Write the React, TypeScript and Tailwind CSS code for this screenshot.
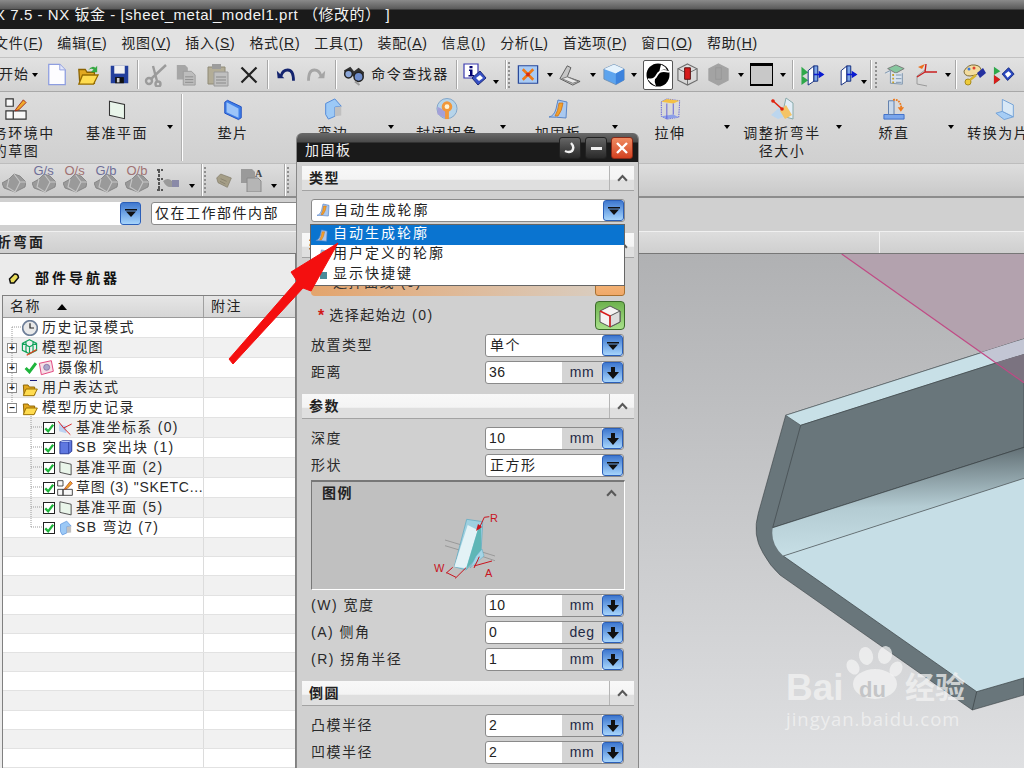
import type { ReactNode } from "react";

const Caret = ({ className = "" }: { className?: string }) => (
  <div className={`flex shrink-0 justify-center ${className}`}>
    <div className="h-0 w-0 border-x-[3px] border-t-[4px] border-x-transparent border-t-black" />
  </div>
);
const Sep = ({ className = "w-[8px]" }: { className?: string }) => (
  <div className={`flex h-full shrink-0 justify-center ${className}`}>
    <div className="h-full w-[2px] border-r border-l border-r-white border-l-[#a8a8a8]" />
  </div>
);
const Dots = () => (
  <div className="h-[26px] w-[5px] shrink-0 border-l-2 border-dotted border-[#8f8f8f]" />
);
const Slot = ({ className, children }: { className: string; children: ReactNode }) => (
  <div className={`flex shrink-0 items-center justify-center ${className}`}>{children}</div>
);
const Svg = ({ className = "h-[22px] w-[22px]", children }: { className?: string; children: ReactNode }) => (
  <svg viewBox="0 0 24 24" className={className}>{children}</svg>
);

const Gusset = ({ className }: { className?: string }) => (
  <Svg className={className}>
    <path d="M3 20 Q8 19 10 12 L12 3 L21 5 L20 21 Q10 20 3 20Z" fill="#a9c8ef" stroke="#5a86c8" strokeWidth="1" />
    <path d="M9 19 Q12 14 13 6 L17 6 Q16 14 12 19Z" fill="#f2a12c" stroke="#c96a10" strokeWidth=".7" />
  </Svg>
);
const DocNew = () => (
  <Svg className="h-[25px] w-[22px]">
    <path d="M3 1H15L21 7V23H3Z" fill="#fdfdff" stroke="#8e9ee0" strokeWidth="1.4" />
    <path d="M15 1V7H21" fill="#e3e7fa" stroke="#8e9ee0" />
  </Svg>
);
const Folder = ({ className = "h-[22px] w-[24px]", arrow = true }: { className?: string; arrow?: boolean }) => (
  <Svg className={className}>
    <path d="M2 6H9L11 9H19V21H3Z" fill="#e2a820" stroke="#8a6200" strokeWidth="1.400" />
    <path d="M6 12H23L18 22H2Z" fill="#ffdc50" stroke="#966c00" strokeWidth="1.400" />
    {arrow && <path d="M12 7Q16 1 20 4L22 2V9H15L18 6Q15 4 12 7Z" fill="#37a844" />}
  </Svg>
);
const Floppy = () => (
  <Svg className="h-[21px] w-[21px]">
    <path d="M2 2H22V22H2Z" fill="#233f9c" />
    <path d="M6 2H18V11H6Z" fill="#f1f1f1" />
    <path d="M7 15H17V22H7Z" fill="#111" />
    <path d="M9 16H12V21H9Z" fill="#cfcfcf" />
  </Svg>
);
const Scissors = () => (
  <Svg className="h-[24px] w-[24px]">
    <g stroke="#9b9b9b" fill="none" strokeWidth="2.4">
      <circle cx="5" cy="18" r="3" />
      <circle cx="14" cy="21" r="2.5" />
      <path d="M7 16 22 2M13 18 9 3" />
    </g>
  </Svg>
);
const Copy = () => (
  <Svg className="h-[22px] w-[22px]">
    <path d="M2 1H11L14 4V17H2Z" fill="#a6a6a6" />
    <path d="M9 8H18L22 12V23H9Z" fill="#bdbdbd" stroke="#9a9a9a" />
    <path d="M11 14H20M11 17H20M11 20H20" stroke="#8a8a8a" />
  </Svg>
);
const Paste = () => (
  <Svg className="h-[24px] w-[24px]">
    <path d="M2 4H19V21H2Z" fill="#b3ad97" stroke="#8f8a76" />
    <path d="M6 1H15V6H6Z" fill="#9c9c9c" />
    <path d="M8 9H22V23H8Z" fill="#c0c0c0" stroke="#9a9a9a" />
    <path d="M10 14H20M10 17H20M10 20H20" stroke="#8a8a8a" />
  </Svg>
);
const Undo = ({ flip = false }: { flip?: boolean }) => (
  <Svg className={`h-[20px] w-[22px] ${flip ? "-scale-x-100" : ""}`}>
    <path d="M6 13Q8 6 14 6Q21 6 21 19" fill="none" stroke={flip ? "#a5a5a5" : "#14246e"} strokeWidth="3.4" />
    <path d="M1 7L10 16H2Z" fill={flip ? "#a5a5a5" : "#14246e"} />
  </Svg>
);
const Binoculars = () => (
  <Svg className="h-[22px] w-[24px]">
    <path d="M1 7 8 3 12 8 17 4 23 9 22 16 15 11 11 14 9 11 4 14Z" fill="#333" />
    <circle cx="6" cy="11" r="4.2" fill="#8ba6d8" stroke="#222" strokeWidth="1.6" />
    <circle cx="17" cy="14" r="5" fill="#6f8dcb" stroke="#222" strokeWidth="1.6" />
    <path d="M13 19 18 23" stroke="#999" strokeWidth="2" />
  </Svg>
);
const Info = () => (
  <Svg className="h-[24px] w-[24px]">
    <path d="M1 1H15V15H1Z" fill="#fff" stroke="#3a3ab0" strokeWidth="1.2" />
    <path d="M6.5 3H9.5V5.2H6.5ZM6 6.5H9.5V12H11V13.4H5.5V12H7V8H6Z" fill="#000070" />
    <path d="M9 15 17 8 23 15 15 22Z" fill="#3650c4" stroke="#1d2a7a" />
    <path d="M13 15 17 12 20 15 16 18Z" fill="#fff" />
  </Svg>
);
const ViewFit = () => (
  <Svg className="h-[21px] w-[22px]">
    <path d="M1 2H23V22H1Z" fill="#a9cbf4" stroke="#29489a" strokeWidth="1.4" />
    <path d="M6 6 18 18M18 6 6 18" stroke="#ef7a18" strokeWidth="3" />
    <path d="M10 10H14V14H10Z" fill="#d82b12" />
  </Svg>
);
const Shade = () => (
  <Svg className="h-[22px] w-[24px]">
    <path d="M1 16 9 2 13 4 9 14 23 19 15 23Z" fill="#c6c6c6" stroke="#555" />
    <path d="M3 16 9 14 21 19 15 21Z" fill="#e8e8e8" stroke="#777" />
  </Svg>
);
const Cube = () => (
  <Svg className="h-[23px] w-[24px]">
    <path d="M12 1 23 6V18L14 23 1 17V6Z" fill="#5da4ee" stroke="#6d8fb4" />
    <path d="M12 1 23 6 14 11 1 6Z" fill="#e5f2fc" />
    <path d="M14 11V23L23 18V6Z" fill="#3d83dd" />
  </Svg>
);
const Yin = () => (
  <Svg className="h-[24px] w-[24px]">
    <circle cx="12" cy="12" r="11.500" fill="#000" />
    <path d="M13 10Q16 5 21 7 19 3 15 1.500 14 5 13 10Z" fill="#fff" />
    <path d="M2 16Q4 20 10 23 8 19 9 15 6 17 2 16Z" fill="#fff" />
    <path d="M2 16Q8 18 11 12T23 9" fill="none" stroke="#fff" strokeWidth="1.800" />
  </Svg>
);
const CubeRed = ({ grey = false }: { grey?: boolean }) => (
  <Svg className="h-[23px] w-[23px]">
    <path d="M12 1 22 6V18L12 23 2 18V6Z" fill={grey ? "#a3a3a3" : "none"} stroke={grey ? "#a3a3a3" : "#6d6d6d"} strokeWidth="1.2" />
    {!grey && <path d="M2 6 12 11 22 6M12 11V23" fill="none" stroke="#6d6d6d" />}
    <path d="M9 5H15V17H9Z" fill={grey ? "#a3a3a3" : "#d61a1a"} stroke={grey ? "#999" : "#5a1010"} />
  </Svg>
);
const Frame = () => <div className="h-[23px] w-[23px] border-x border-b-2 border-t-[3px] border-black bg-[#c8c8c8]" />;
const Slab = ({ tail = false }: { tail?: boolean }) => (
  <Svg className="h-[23px] w-[26px]">
    {tail && <path d="M1 4 8 10 1 14ZM1 13 8 18 1 23Z" fill="#2ea84a" />}
    <path d="M8 8 14 3V19L8 23Z" fill="#fff" stroke="#102a7c" />
    <path d="M14 3H18V19H14Z" fill="#7da7e8" stroke="#102a7c" />
    <path d="M14 12H23" stroke="#0a1bd0" strokeWidth="1.6" />
    <path d="M19 8 25 12 19 16Z" fill="#0a1bd0" />
  </Svg>
);
const Layers = () => (
  <Svg className="h-[22px] w-[24px]">
    <path d="M4 5 13 1 22 5 13 10Z" fill="#87c79f" stroke="#777" />
    <path d="M1 10 7 7V21L20 22V10" fill="#d9e3ef" stroke="#7890a8" />
    <path d="M9 11H11V13H9ZM9 15H11V17H9ZM9 19H11V21H9Z" fill="#c5a029" />
    <path d="M13 12H19M13 16H19M13 20H19" stroke="#7890a8" />
  </Svg>
);
const Axes = () => (
  <Svg className="h-[24px] w-[24px]">
    <path d="M3 21 3 13 11 7" stroke="#9a9a9a" fill="none" />
    <path d="M3 21 13 23" stroke="#9a9a9a" />
    <path d="M11 9H23M11 9 12 1M11 9 3 14" stroke="#c91f1f" strokeWidth="1.4" />
    <path d="M4 4 11 1 8 6Z" fill="#ec6f1b" />
  </Svg>
);
const Palette = () => (
  <Svg className="h-[24px] w-[24px]">
    <path d="M2 8Q6 1 13 2T19 9Q14 13 8 13 2 13 2 8Z" fill="#f3dc9e" stroke="#7b6a38" />
    <circle cx="7" cy="6" r="1.500" fill="#3a7ae0" />
    <circle cx="12" cy="5" r="1.500" fill="#e04030" />
    <path d="M15 10 21 5 24 10 18 15Z" fill="#2430a0" />
    <circle cx="6" cy="19" r="3" fill="#eecb3a" stroke="#a88a1a" />
    <path d="M8 17 14 12" stroke="#d8b430" strokeWidth="2.400" />
  </Svg>
);
const Play = () => (
  <Svg className="h-[22px] w-[24px]">
    <path d="M1 3 8 8 1 12ZM1 12 8 17 1 22Z" fill="#2ea84a" />
    <path d="M1 12 8 17 1 22Z" fill="#d81c1c" />
    <path d="M10 11 17 4 23 11 16 18Z" fill="#2a48c0" stroke="#152a80" />
    <path d="M13 11 17 8 20 11 16 15Z" fill="#fff" />
  </Svg>
);
const Sketch = ({ className = "h-[22px] w-[22px]" }: { className?: string }) => (
  <Svg className={className}>
    <path d="M1 1H9V9H1ZM1 14H9V23H1ZM9 14H23V23H9Z" fill="#f8f8f8" stroke="#333" strokeWidth="1.300" />
    <path d="M12 12 20 2 23 5 15 13 11 14Z" fill="#f0a92a" stroke="#a0291a" />
  </Svg>
);
const Plane = ({ className = "h-[23px] w-[20px]" }: { className?: string }) => (
  <Svg className={className}>
    <path d="M3 2 21 6V23L3 19Z" fill="#e9f5ea" stroke="#333" strokeWidth="1.300" />
  </Svg>
);
const Tab = () => (
  <Svg className="h-[23px] w-[22px]">
    <path d="M3 4 6 2 21 9V21L18 23 3 16Z" fill="#3f7fe8" stroke="#1d4ac0" />
    <path d="M5 4 18 11V21L5 15Z" fill="#9cc4f8" />
  </Svg>
);
const Flange = ({ className = "h-[24px] w-[22px]" }: { className?: string }) => (
  <Svg className={className}>
    <path d="M4 6 14 1 21 9 14 10 14 20 7 23 4 18Z" fill="#9cc9f6" stroke="#4a86d8" />
    <path d="M14 10 21 9 21 19 14 20Z" fill="#c0c0c0" />
  </Svg>
);
const Corner = () => (
  <Svg className="h-[23px] w-[24px]">
    <circle cx="12" cy="11" r="10.500" fill="#b6d4ea" stroke="#7fa4c8" />
    <path d="M12 22 2 17 2 9 12 14Z" fill="#a4a0d8" />
    <circle cx="12" cy="9" r="5.500" fill="#f1983b" />
    <circle cx="12" cy="9" r="2.500" fill="#fff3d6" />
    <path d="M10 13H14V22H10Z" fill="#f1983b" />
  </Svg>
);
const Extrude = () => (
  <Svg className="h-[22px] w-[23px]">
    <path d="M2 4 8 1 22 3 21 21 8 23 2 20Z" fill="none" stroke="#5a5ad8" strokeDasharray="1.500 1" />
    <path d="M2 4 8 1 22 3 15 6Z" fill="#f4c045" />
    <path d="M2 20 8 23 21 21 15 18Z" fill="#8ea0e8" />
    <path d="M8 6V23M15 6V18" stroke="#5a5ad8" />
  </Svg>
);
const Bendr = () => (
  <Svg className="h-[24px] w-[24px]">
    <path d="M16 1 23 6V22L12 19Z" fill="#e3eef7" stroke="#8aa" />
    <path d="M1 18 11 9 14 20 8 22Z" fill="#bcd6ee" />
    <path d="M10 14 16 8 22 18 15 22Z" fill="#f4c466" />
    <path d="M2 3 12 12" stroke="#e0220f" strokeWidth="1.600" />
    <circle cx="3" cy="4" r="1.800" fill="#e0220f" />
    <circle cx="12" cy="12" r="1.800" fill="#e0220f" />
  </Svg>
);
const Straighten = () => (
  <Svg className="h-[22px] w-[24px]">
    <path d="M1 18H23V23H1Z" fill="#7aa6ec" stroke="#3a6bc8" />
    <path d="M6 3H12V18H6Z" fill="#c8d8ea" stroke="#5a7aa8" />
    <path d="M11 2Q19 1 20 11" fill="none" stroke="#ec7a1e" strokeWidth="2" strokeDasharray="2 1" />
    <path d="M16 10H23L19.500 15Z" fill="#ec7a1e" />
  </Svg>
);
const ToSheet = () => (
  <Svg className="h-[23px] w-[22px]">
    <path d="M1 16 8 14 20 20 10 23Z" fill="#a6cdf5" stroke="#6fa0d8" />
    <path d="M8 14V1L20 7V20Z" fill="#d8e8f6" stroke="#6fa0d8" />
  </Svg>
);
const Feat = ({ label, red }: { label?: string; red?: boolean }) => (
  <div className="relative h-[26px] w-[24px]">
    <svg viewBox="0 0 24 20" className="absolute bottom-0 left-0 h-[20px] w-[24px]">
      <path d="M0 10 7 6 12 1 18 3 24 9 23 14 13 19 2 15Z" fill="#9a9a9a" stroke="#7e7e7e" strokeWidth=".8" />
      <path d="M7 6 5 14 13 19 18 9 12 1M18 9 24 9" fill="none" stroke="#c6c6c6" strokeWidth="1.100" />
    </svg>
    {label && (
      <span className={`absolute top-[-3px] left-[2px] text-[13px] leading-[14px] ${red ? "text-[#a07272]" : "text-[#6f6f98]"}`}>{label}</span>
    )}
  </div>
);

const Chevron = () => (
  <svg viewBox="0 0 14 10" className="h-[8px] w-[13px]">
    <path d="M1.500 8.500 7 2.500 12.500 8.500" fill="none" stroke="#595959" strokeWidth="2.600" />
  </svg>
);

const DropBtn = ({ fat = false }: { fat?: boolean }) => (
  <div className="flex h-full w-[21px] shrink-0 items-center justify-center rounded-[3px] border border-[#2b5fb8] bg-gradient-to-b from-[#3f78cf] to-[#a6d4fb]">
    {fat ? (
      <svg viewBox="0 0 12 12" className="h-[12px] w-[12px]">
        <path d="M4 0H8V5H12L6 12 0 5H4Z" fill="#111" />
      </svg>
    ) : (
      <svg viewBox="0 0 12 8" className="h-[8px] w-[12px]">
        <path d="M0 0H12V1.500H0ZM1 2.500H11L6 8Z" fill="#111" />
      </svg>
    )}
  </div>
);

const Section = ({ title }: { title: string }) => (
  <div className="flex h-[25px] w-[332px] shrink-0 items-stretch border-b border-[#a3a3a3] bg-[linear-gradient(#f8f8f8_0%,#f4f4f4_55%,#dfdfdf_60%,#dfdfdf_100%)]">
    <div className="flex-1 pl-[7px] text-[14px] leading-[24px] font-bold tracking-[1.500px] text-[#222]">{title}</div>
    <div className="flex w-[25px] items-center justify-center border-l border-[#b5b5b5]">
      <Chevron />
    </div>
  </div>
);

const labelCls = "text-[14px] leading-[23px] tracking-[1.500px] text-[#2a2a2a] whitespace-nowrap";

const Select = ({ label, value }: { label: string; value: string }) => (
  <div className="flex h-[23px] w-[313px] shrink-0 items-center justify-between">
    <span className={labelCls}>{label}</span>
    <div className="flex h-[23px] w-[139px] items-stretch rounded-[3px] border border-[#8a8a8a] bg-white pl-[4px]">
      <span className="flex-1 text-[14px] leading-[21px] tracking-[1.500px] text-[#222]">{value}</span>
      <DropBtn />
    </div>
  </div>
);

const Field = ({ label, value, unit }: { label: string; value: string; unit: string }) => (
  <div className="flex h-[23px] w-[313px] shrink-0 items-center justify-between">
    <span className={labelCls}>{label}</span>
    <div className="flex h-[23px] w-[139px] items-stretch rounded-[3px] border border-[#8a8a8a] bg-white pl-[3px]">
      <span className="flex-1 text-[14px] leading-[21px] tracking-[0.500px] text-[#222]">{value}</span>
      <span className="w-[40px] bg-[#d4d4d4] text-center text-[14px] leading-[21px] tracking-[0.500px] text-[#1f2a44]">{unit}</span>
      <DropBtn fat />
    </div>
  </div>
);

const Ribbon = ({ icon, lines, className }: { icon: ReactNode; lines: string[]; className: string }) => (
  <div className={`flex h-full shrink-0 flex-col items-center pt-[4px] ${className}`}>
    <div className="flex h-[26px] items-center justify-center">{icon}</div>
    <div className="mt-[2px] text-center text-[14px] leading-[18px] tracking-[1.500px] whitespace-nowrap text-[#222]">
      {lines.map((l) => (
        <div key={l}>{l}</div>
      ))}
    </div>
  </div>
);

type Row = { level: 0 | 1; exp?: "+" | "-"; check?: boolean; tight?: boolean; icon: ReactNode; text: string };

const Check = ({ className = "h-[12px] w-[12px]" }: { className?: string }) => (
  <Svg className={className}>
    <path d="M3 13 10 20 22 4" fill="none" stroke="#1fb53c" strokeWidth="5.500" />
  </Svg>
);
const CheckBox = () => (
  <div className="flex h-[12px] w-[12px] shrink-0 items-center justify-center border border-[#222] bg-white">
    <Check />
  </div>
);

const rows: Row[] = [
  { level: 0, icon: (
    <Svg className="h-[16px] w-[16px]">
      <circle cx="12" cy="12" r="11" fill="#e9e9e9" stroke="#6e7f99" strokeWidth="2.500" />
      <path d="M12 5V12H18" stroke="#222" fill="none" strokeWidth="1.800" />
    </Svg>
  ), text: "历史记录模式" },
  { level: 0, exp: "+", icon: (
    <Svg className="h-[17px] w-[17px]">
      <path d="M12 1 22 6V16L12 21 2 16V6ZM2 6 12 11 22 6M12 11V21M7 3.500V18.500M17 3.500V18.500" fill="none" stroke="#12a35a" strokeWidth="1.700" />
      <path d="M8 23 22 15" stroke="#e0401f" strokeWidth="1.800" />
    </Svg>
  ), text: "模型视图" },
  { level: 0, exp: "+", check: true, icon: (
    <Svg className="h-[16px] w-[16px]">
      <path d="M2 5 20 1 23 17 5 22Z" fill="#f6dfe6" stroke="#e0407a" strokeWidth="1.400" />
      <circle cx="13" cy="11" r="4.500" fill="#a9a6c8" stroke="#7a5a9a" />
    </Svg>
  ), text: "摄像机" },
  { level: 0, exp: "+", icon: (
    <div className="relative h-[16px] w-[16px]">
      <Folder className="absolute top-[1px] left-0 h-[16px] w-[16px]" arrow={false} />
      <div className="absolute top-[-3px] left-[8px] h-[4px] w-[7px] border-y border-[#1a1a7a]" />
    </div>
  ), text: "用户表达式" },
  { level: 0, exp: "-", icon: <Folder className="h-[16px] w-[16px]" arrow={false} />, text: "模型历史记录" },
  { level: 1, icon: (
    <Svg className="h-[16px] w-[16px]">
      <path d="M3 6 14 9 14 20 3 17Z" fill="#bcd2f2" />
      <path d="M2 2 10 12 22 6M10 12 20 22" stroke="#d81c1c" strokeWidth="1.400" fill="none" />
    </Svg>
  ), text: "基准坐标系 (0)" },
  { level: 1, icon: (
    <Svg className="h-[15px] w-[15px]">
      <path d="M3 3 8 1H22V18L17 22H3Z" fill="#5f78e0" stroke="#1d2f90" strokeWidth="1.400" />
      <path d="M3 3H17V22" fill="none" stroke="#1d2f90" />
      <path d="M3 3 8 1H22L17 3Z" fill="#b7c6f4" />
    </Svg>
  ), text: "SB 突出块 (1)" },
  { level: 1, icon: <Plane className="h-[16px] w-[15px]" />, text: "基准平面 (2)" },
  { level: 1, tight: true, icon: <Sketch className="h-[16px] w-[16px]" />, text: "草图 (3) \"SKETC..." },
  { level: 1, icon: <Plane className="h-[16px] w-[15px]" />, text: "基准平面 (5)" },
  { level: 1, icon: <Flange className="h-[16px] w-[15px]" />, text: "SB 弯边 (7)" },
];

function TreeRow({ row, i }: { row?: Row; i: number }) {
  const stripe = i % 2 === 0 ? "bg-white" : "bg-[#f1f1f1]";
  return (
    <div className={`flex h-[20px] border-b border-[#e2e2e2] ${stripe}`}>
      <div className="flex h-full w-[201px] shrink-0 items-center overflow-hidden border-r border-[#dcdcdc]">
        {row && row.level === 0 && (
          <>
            <div className="flex w-[14px] shrink-0 justify-end">
              {row.exp && (
                <div className="relative z-10 flex h-[10px] w-[10px] items-center justify-center border border-[#8a8a8a] bg-white text-[10px] leading-[8px] font-bold text-[#222]">
                  {row.exp === "+" ? "+" : "–"}
                </div>
              )}
            </div>
            {row.check ? (
              <>
                <div className="ml-[7px] w-[13px] shrink-0"><Check className="h-[13px] w-[13px]" /></div>
                <div className="ml-[1px] w-[16px] shrink-0">{row.icon}</div>
              </>
            ) : (
              <div className="flex w-[21px] shrink-0 justify-end">{row.icon}</div>
            )}
            <span className="ml-[4px] text-[14px] tracking-[1.500px] whitespace-nowrap text-[#2a2a2a]">{row.text}</span>
          </>
        )}
        {row && row.level === 1 && (
          <>
            <div className="ml-[40px]"><CheckBox /></div>
            <div className="ml-[2px] flex w-[16px] shrink-0 justify-center">{row.icon}</div>
            <span className={`ml-[3px] text-[14px] whitespace-nowrap text-[#2a2a2a] ${row.tight ? "tracking-[0.700px]" : "tracking-[1.300px]"}`}>{row.text}</span>
          </>
        )}
      </div>
    </div>
  );
}

const stripes = Array.from({ length: 23 }, (_, i) => i);

export default function App() {
  return (
    <div className="relative flex h-[768px] w-[1024px] flex-col overflow-hidden bg-[#d4d4d4] [font-family:'Liberation_Sans','Noto_Sans_CJK_SC',sans-serif]">
      {/* title bar */}
      <div className="h-[29px] shrink-0 bg-[linear-gradient(#8a8a8a_0px,#5a5a5a_9px,#1a1a1a_10px,#1a1a1a_100%)] pt-[6px] text-[15px] leading-[17px] tracking-[0.550px] whitespace-nowrap text-[#f2f2f2]">
        <div className="-ml-[5px]">X 7.5 - NX 钣金 - [sheet_metal_model1.prt （修改的） ]</div>
      </div>

      {/* menu */}
      <div className="flex h-[29px] shrink-0 items-center gap-[14px] overflow-hidden border-b border-[#c2c2c2] bg-[#e2e2e2] text-[14px] tracking-[0.670px] whitespace-nowrap text-[#222]">
        {["文件|F", "编辑|E", "视图|V", "插入|S", "格式|R", "工具|T", "装配|A", "信息|I", "分析|L", "首选项|P", "窗口|O", "帮助|H"].map((m, i) => {
          const [a, b] = m.split("|");
          return (
            <span key={m} className={i === 0 ? "-ml-[6px]" : ""}>
              {a}(<span className="underline">{b}</span>)
            </span>
          );
        })}
      </div>

      {/* standard toolbar */}
      <div className="flex h-[34px] shrink-0 items-center overflow-hidden border-b border-[#a8a8a8] bg-gradient-to-b from-[#e2e2e2] to-[#d2d2d2] py-[2px]">
        <div className="flex w-[42px] shrink-0 items-center gap-[3px] text-[14px] tracking-[1px] text-[#222]">
          <span className="-ml-[1px]">开始</span>
          <Caret />
        </div>
        <Slot className="w-[30px]"><DocNew /></Slot>
        <Slot className="w-[32px]"><Folder /></Slot>
        <Slot className="w-[30px]"><Floppy /></Slot>
        <Sep />
        <Slot className="w-[28px]"><Scissors /></Slot>
        <Slot className="w-[32px]"><Copy /></Slot>
        <Slot className="w-[32px]"><Paste /></Slot>
        <Slot className="w-[30px]">
          <Svg className="h-[18px] w-[18px]"><path d="M2 2 22 22M22 2 2 22" stroke="#222" strokeWidth="3" /></Svg>
        </Slot>
        <Sep />
        <Slot className="w-[28px]"><Undo /></Slot>
        <Slot className="w-[32px]"><Undo flip /></Slot>
        <Sep />
        <Slot className="w-[28px]"><Binoculars /></Slot>
        <Slot className="w-[84px] text-[14px] tracking-[1.500px] whitespace-nowrap text-[#222]">命令查找器</Slot>
        <Sep className="w-[10px]" />
        <Slot className="w-[26px]"><Info /></Slot>
        <Caret className="w-[16px] pt-[14px]" />
        <Sep className="w-[4px]" />
        <Slot className="w-[5px]"><Dots /></Slot>
        <Slot className="w-[30px]"><ViewFit /></Slot>
        <Caret className="w-[14px]" />
        <Slot className="w-[26px]"><Shade /></Slot>
        <Caret className="w-[20px]" />
        <Slot className="w-[22px]"><Cube /></Slot>
        <Caret className="w-[18px]" />
        <Slot className="w-[30px]">
          <div className="flex h-[30px] w-[30px] items-center justify-center rounded-[2px] border border-[#555] bg-white"><Yin /></div>
        </Slot>
        <Slot className="w-[28px]"><CubeRed /></Slot>
        <Slot className="w-[34px]"><CubeRed grey /></Slot>
        <Caret className="w-[12px]" />
        <Slot className="w-[28px]"><Frame /></Slot>
        <Caret className="w-[16px]" />
        <Sep className="w-[4px]" />
        <Slot className="w-[34px]"><Slab tail /></Slot>
        <Slot className="w-[32px]"><Slab /></Slot>
        <Caret className="w-[6px] pt-[14px]" />
        <Sep />
        <Slot className="w-[5px]"><Dots /></Slot>
        <Slot className="w-[30px]"><Layers /></Slot>
        <Slot className="w-[32px]"><Axes /></Slot>
        <Caret className="w-[12px]" />
        <Sep className="w-[4px]" />
        <Slot className="w-[32px]"><Palette /></Slot>
        <Slot className="w-[28px]"><Play /></Slot>
      </div>

      {/* big buttons */}
      <div className="flex h-[72px] shrink-0 items-stretch overflow-hidden border-b border-[#bdbdbd] bg-gradient-to-b from-[#dcdcdc] to-[#d0d0d0]">
        <Ribbon className="-ml-[40px] w-[112px]" icon={<Sketch />} lines={["任务环境中", "的草图"]} />
        <Ribbon className="w-[90px]" icon={<Plane />} lines={["基准平面"]} />
        <Caret className="w-[16px] pt-[33px]" />
        <div className="flex h-full w-[8px] shrink-0 justify-center py-[2px]"><div className="h-full w-[2px] border-r border-l border-r-white border-l-[#b0b0b0]" /></div>
        <Ribbon className="w-[94px]" icon={<Tab />} lines={["垫片"]} />
        <Ribbon className="w-[106px]" icon={<Flange />} lines={["弯边"]} />
        <Caret className="w-[10px] pt-[33px]" />
        <Ribbon className="w-[102px]" icon={<Corner />} lines={["封闭拐角"]} />
        <Caret className="w-[10px] pt-[33px]" />
        <Ribbon className="w-[100px]" icon={<Gusset className="h-[24px] w-[24px]" />} lines={["加固板"]} />
        <Caret className="w-[14px] pt-[33px]" />
        <Ribbon className="w-[96px]" icon={<Extrude />} lines={["拉伸"]} />
        <Caret className="w-[18px] pt-[33px]" />
        <Ribbon className="w-[92px]" icon={<Bendr />} lines={["调整折弯半", "径大小"]} />
        <Caret className="w-[22px] pt-[33px]" />
        <Ribbon className="w-[88px]" icon={<Straighten />} lines={["矫直"]} />
        <Caret className="w-[26px] pt-[33px]" />
        <Ribbon className="w-[84px]" icon={<ToSheet />} lines={["转换为片体"]} />
      </div>

      {/* feature toolbar */}
      <div className="flex h-[34px] shrink-0 items-center overflow-hidden border-b-2 border-[#8c8c8c] bg-gradient-to-b from-[#dedede] to-[#c9c9c9]">
        <Slot className="w-[28px]"><Feat /></Slot>
        <Slot className="w-[31px]"><Feat label="G/s" /></Slot>
        <Slot className="w-[31px]"><Feat label="O/s" red /></Slot>
        <Slot className="w-[31px]"><Feat label="G/b" /></Slot>
        <Slot className="w-[31px]"><Feat label="O/b" red /></Slot>
        <Slot className="w-[32px]">
          <Svg className="h-[24px] w-[24px]">
            <path d="M1 2H7M3 2V22M1 22H7M1 11H7" stroke="#555" strokeWidth="2" strokeDasharray="3 1" />
            <path d="M7 13Q12 9 16 13H23V19H14Q10 19 7 13Z" fill="#9a9a9a" />
            <path d="M16 12H23V19H16Z" fill="#8a8aa8" />
          </Svg>
        </Slot>
        <Caret className="w-[16px] pt-[12px]" />
        <Sep className="w-[4px]" />
        <Slot className="w-[5px]"><Dots /></Slot>
        <Slot className="w-[30px]">
          <Svg className="h-[16px] w-[24px]">
            <path d="M1 9 7 3 23 9 17 23 3 16Z" fill="#a59e87" stroke="#7e7966" />
            <path d="M7 10 16 14M6 14 14 18" stroke="#7e7966" />
          </Svg>
        </Slot>
        <Slot className="w-[26px]">
          <Svg className="h-[24px] w-[24px]">
            <path d="M1 1H12L15 4V15H1Z" fill="#9a9a9a" />
            <path d="M7 10H18L21 13V24H7Z" fill="#b5b5b5" stroke="#8a8a8a" />
            <text x="15" y="9" fontSize="10" fontWeight="700" fontFamily="Liberation Serif" fill="#444">A</text>
          </Svg>
        </Slot>
        <Caret className="w-[18px] pt-[12px]" />
        <Sep className="w-[4px]" />
        <Slot className="w-[5px]"><Dots /></Slot>
      </div>

      {/* selection filter */}
      <div className="flex h-[33px] shrink-0 items-center gap-[10px] bg-[#d0d0d0] pb-[3px]">
        <div className="flex h-[23px] w-[141px] items-stretch rounded-r-[3px] bg-white">
          <div className="flex-1" />
          <DropBtn />
        </div>
        <div className="flex h-[23px] w-[200px] items-center rounded-[3px] border border-[#8a8a8a] bg-white pl-[3px] text-[14px] tracking-[1.500px] text-[#222]">仅在工作部件内部</div>
      </div>

      {/* active command band */}
      <div className="flex h-[23px] shrink-0 border-y border-t-[#f0f0f0] border-b-[#777] bg-gradient-to-b from-[#dddddd] to-[#cfcfcf]">
        <div className="w-[880px] border-r border-[#f2f2f2] text-[14px] leading-[21px] font-bold tracking-[2px] text-[#222]">
          <span className="-ml-[3px] block">折弯面</span>
        </div>
      </div>

      {/* main area */}
      <div className="flex min-h-0 flex-1">
        <div className="flex w-[296px] shrink-0 flex-col overflow-hidden border-r border-[#808080] bg-[#ebebeb]">
          <div className="flex h-[41px] shrink-0 items-center pt-[8px] pl-[8px]">
            <Svg className="h-[12px] w-[12px]">
              <path d="M3 12 13 2Q20 1 21 9L12 20 5 20Z" fill="#e9dc5a" stroke="#111" strokeWidth="3" />
            </Svg>
            <span className="ml-[15px] text-[14px] font-bold tracking-[3px] text-[#111]">部件导航器</span>
          </div>
          <div className="relative ml-[2px] flex min-h-0 flex-1 flex-col border-t border-l border-[#808080]">
            <div className="flex h-[22px] shrink-0 border-b border-[#9a9a9a] bg-gradient-to-b from-[#e6e6e6] to-[#d6d6d6] text-[14px] leading-[21px] tracking-[1.500px] text-[#222]">
              <div className="flex w-[201px] items-center border-r border-[#a0a0a0] pl-[7px]">
                名称
                <div className="ml-[16px] h-0 w-0 border-x-[5px] border-b-[6px] border-x-transparent border-b-black" />
              </div>
              <div className="pl-[7px]">附注</div>
            </div>
            {stripes.map((i) => (
              <TreeRow key={i} row={rows[i]} i={i} />
            ))}
            <svg className="pointer-events-none absolute top-[22px] left-0 h-[240px] w-[60px]" viewBox="0 0 60 240">
              <g stroke="#9a9a9a" strokeDasharray="1 1" fill="none">
                <path d="M9 9V89M9 9H19" />
                <path d="M28 98V209M28 109H40M28 129H40M28 149H40M28 169H40M28 189H40M28 209H40" />
              </g>
            </svg>
          </div>
        </div>

        {/* graphics window */}
        <div className="relative min-w-0 flex-1 bg-gradient-to-b from-[#b0b1b3] to-[#dfe0e2]">
          <svg className="absolute inset-0 h-full w-full" viewBox="296 254 728 514">
            <defs>
              <linearGradient id="bend" x1="0.47" y1="0" x2="0.53" y2="1">
                <stop offset="0" stopColor="#5e6b70" />
                <stop offset="0.55" stopColor="#b4ccd3" />
                <stop offset="1" stopColor="#c8e0e7" />
              </linearGradient>
            </defs>
            <path d="M841.700 254H1024V382.700Z" fill="#b3a2ae" />
            <path d="M785.700 415.300 758.300 513.300Q752 535 763 553 770 566 780 575L972.300 710 1024 695V339Z" fill="#69767b" stroke="#3a4144" strokeWidth=".6" />
            <path d="M785.700 415.300 1024 339V354L800.700 425.300Z" fill="#c8e0e7" stroke="#4a5255" strokeWidth=".6" />
            <path d="M800.700 425.300 1024 354V447.300L772.700 527.700Z" fill="#69767b" stroke="#3a4144" strokeWidth=".6" />
            <path d="M772.700 527.700 1024 447.300V478.300L783.300 556Q770 544 772.700 527.700Z" fill="url(#bend)" />
            <path d="M772.700 527.700 1024 447.300" stroke="#3a4144" strokeWidth=".7" />
            <path d="M783.300 556 1024 478.300V678L976.700 691.700Z" fill="#c6dee6" />
            <path d="M783.300 556 1024 478.300" stroke="#4a5255" strokeWidth=".7" />
            <path d="M783.300 556 976.700 691.700 1024 678M976.700 691.700 972.300 710" fill="none" stroke="#3a4144" strokeWidth=".7" />
            <path d="M980 352.700 1024 339V354L996.700 362.300Z" fill="#c3c6d4" />
            <path d="M996.700 362.300 1024 354V382.700Z" fill="#7b7380" />
            <path d="M841.700 254 1024 382.700" stroke="#c04a85" strokeWidth="1.200" />
            <g fill="#f4f4f4" fillOpacity=".72">
              <ellipse cx="866" cy="656" rx="7" ry="9" transform="rotate(-15 866 656)" />
              <ellipse cx="885" cy="655" rx="7" ry="9" transform="rotate(12 885 655)" />
              <ellipse cx="853" cy="667" rx="6" ry="8" transform="rotate(-30 853 667)" />
              <ellipse cx="896" cy="669" rx="6" ry="8" transform="rotate(30 896 669)" />
              <ellipse cx="875" cy="684" rx="22" ry="15" />
              <text x="786" y="700" fontSize="37" fontWeight="700" fontFamily="Liberation Sans">Bai</text>
              <text x="905" y="698" fontSize="30" fontWeight="700" fontFamily="Noto Sans CJK SC">经验</text>
              <text x="786" y="726" fontSize="18.500" letterSpacing="1" fontFamily="Open Sans">jingyan.baidu.com</text>
            </g>
            <text x="859" y="697" fontSize="22" fontWeight="700" fontFamily="Liberation Sans" fill="#c4c5c7">du</text>
          </svg>
        </div>
      </div>

      {/* dialog */}
      <div className="absolute top-[133px] left-[296px] flex h-[635px] w-[343px] flex-col overflow-hidden rounded-t-[6px] border-x border-[#888] bg-[#d0d0d0]">
        <div className="flex h-[29px] shrink-0 items-end bg-[linear-gradient(#6a6a6a_0px,#4a4a4a_9px,#1a1a1a_10px,#1a1a1a_100%)]">
          <div className="flex-1 pb-[3px] pl-[8px] text-[14px] leading-[17px] tracking-[1.500px] text-[#f0f0f0]">加固板</div>
          <div className="mr-[5px] mb-[3px] flex gap-[4px]">
            <div className="flex h-[22px] w-[22px] items-center justify-center rounded-[3px] border border-[#222] bg-gradient-to-b from-[#666] to-[#2a2a2a]">
              <svg viewBox="0 0 12 12" className="h-[12px] w-[12px]"><path d="M7 1Q11 5 8 9 5 11 1 9" fill="none" stroke="#f0f0f0" strokeWidth="2.400" /></svg>
            </div>
            <div className="flex h-[22px] w-[22px] items-center justify-center rounded-[3px] border border-[#222] bg-gradient-to-b from-[#666] to-[#2a2a2a]">
              <div className="h-[3px] w-[11px] bg-[#f0f0f0]" />
            </div>
            <div className="flex h-[22px] w-[22px] items-center justify-center rounded-[3px] border border-[#8a2a18] bg-gradient-to-b from-[#f08a60] to-[#d2401f]">
              <svg viewBox="0 0 12 12" className="h-[12px] w-[12px]"><path d="M1 1 11 11M11 1 1 11" stroke="#fff" strokeWidth="2.400" /></svg>
            </div>
          </div>
        </div>

        <div className="flex flex-col items-start pl-[5px]">
          <div className="mt-[4px]"><Section title="类型" /></div>
          <div className="mt-[8px] ml-[9px] flex h-[23px] w-[314px] items-stretch rounded-[3px] border border-[#8a8a8a] bg-white pl-[3px]">
            <Gusset className="mt-[2px] h-[16px] w-[16px]" />
            <span className="ml-[3px] flex-1 text-[14px] leading-[21px] tracking-[1.900px] text-[#222]">自动生成轮廓</span>
            <DropBtn />
          </div>
          <div className="mt-[11px]"><Section title="轮廓" /></div>
          <div className="mt-[5px] ml-[9px] flex h-[33px] w-[314px] items-end justify-between rounded-b-[4px] bg-gradient-to-r from-[#e3a46c] to-[#d8d0c6]">
            <div className="pb-[3px] pl-[22px] text-[14px] tracking-[1.500px] text-[#333]">选择曲线 (0)</div>
            <div className="h-[26px] w-[30px] rounded-[3px] border border-[#a87030] bg-gradient-to-b from-[#f6c088] to-[#f0a868]" />
          </div>
          <div className="mt-[5px] ml-[9px] flex h-[29px] w-[314px] items-center justify-between">
            <div className="flex items-center">
              <span className="ml-[7px] text-[16px] leading-[16px] font-bold text-[#d01818]">*</span>
              <span className="ml-[5px] text-[14px] tracking-[1.500px] text-[#2a2a2a]">选择起始边 (0)</span>
            </div>
            <div className="flex h-[29px] w-[30px] items-center justify-center rounded-[4px] border border-[#3a6a2a] bg-gradient-to-b from-[#6eb24e] to-[#a8e08a]">
              <Svg className="h-[24px] w-[24px]">
                <path d="M12 2 22 7V18L12 23 2 18V7Z" fill="#f5f3f3" stroke="#555" />
                <path d="M12 12 22 7V18L12 23Z" fill="#dcdcdc" stroke="#555" />
                <path d="M2 7 12 12V23" fill="none" stroke="#d81c1c" strokeWidth="1.500" />
              </Svg>
            </div>
          </div>
          <div className="mt-[4px] ml-[9px] flex flex-col gap-[4px]">
            <Select label="放置类型" value="单个" />
            <Field label="距离" value="36" unit="mm" />
          </div>
          <div className="mt-[10px]"><Section title="参数" /></div>
          <div className="mt-[8px] ml-[9px] flex flex-col gap-[4px]">
            <Field label="深度" value="10" unit="mm" />
            <Select label="形状" value="正方形" />
          </div>
          <div className="mt-[3px] ml-[9px] flex h-[110px] w-[314px] flex-col border-t-2 border-r border-b border-l border-t-[#777] border-r-white border-b-white border-l-[#777] bg-[#c0c0c0]">
            <div className="flex h-[22px] items-center justify-between pr-[6px] pl-[10px]">
              <span className="text-[14px] font-bold tracking-[1.500px] text-[#222]">图例</span>
              <Chevron />
            </div>
            <div className="flex justify-center pt-[8px]">
              <svg viewBox="0 0 72 72" className="h-[72px] w-[72px]">
                <g stroke="#8f8f8f" strokeWidth=".8">
                  <path d="M13 28 29.700 33M13 33.700 29.700 38.700M49 39.700 63 44M49 44 63 48.700" />
                </g>
                <path d="M34.700 7.300 50.700 9.700 49 41.300 34 58 22.300 54.700Z" fill="#9ed0e0" stroke="#5aa8c0" strokeWidth=".7" />
                <path d="M35.700 13 45.700 18 34 56.300 22.300 54.700Z" fill="#e3f2f6" />
                <path d="M45.700 18 49 14.700 49 41.300 34 57.300Z" fill="#5fb6b6" />
                <path d="M44 44 50 37 52 44 38 56Z" fill="#a5d5e6" stroke="#5aa8c0" strokeWidth=".5" />
                <g stroke="#c8141e" strokeWidth="1" fill="none">
                  <path d="M14 61.300 20.700 55.300M23.300 66.300 34 55.700M14.700 60.700 24 65.300" />
                  <path d="M47.300 44.700 42 56M42 54 60 49" />
                  <path d="M57.300 4.700 52.300 5.300 46.700 17.300" />
                </g>
                <path d="M44 19 46 12 50 15Z" fill="#c8141e" />
                <g fontFamily="Liberation Sans" fontSize="11" fill="#c8141e">
                  <text x="58" y="10">R</text>
                  <text x="2" y="60">W</text>
                  <text x="53" y="65">A</text>
                </g>
              </svg>
            </div>
          </div>
          <div className="mt-[4px] ml-[9px] flex flex-col gap-[4px]">
            <Field label="(W) 宽度" value="10" unit="mm" />
            <Field label="(A) 侧角" value="0" unit="deg" />
            <Field label="(R) 拐角半径" value="1" unit="mm" />
          </div>
          <div className="mt-[10px]"><Section title="倒圆" /></div>
          <div className="mt-[8px] ml-[9px] flex flex-col gap-[4px]">
            <Field label="凸模半径" value="2" unit="mm" />
            <Field label="凹模半径" value="2" unit="mm" />
          </div>
        </div>
      </div>

      {/* open type list */}
      <div className="absolute top-[224px] left-[310px] flex h-[62px] w-[315px] flex-col border border-[#666] bg-white text-[14px] tracking-[2px] text-[#222]">
        <div className="flex h-[20px] items-center bg-[#0a74d0] pl-[3px] text-white">
          <Gusset className="h-[15px] w-[15px]" />
          <span className="ml-[4px] pb-[4px]">自动生成轮廓</span>
        </div>
        <div className="flex h-[20px] items-center pl-[3px]">
          <Gusset className="h-[15px] w-[15px]" />
          <span className="ml-[4px] pb-[4px]">用户定义的轮廓</span>
        </div>
        <div className="flex h-[20px] items-center pl-[3px]">
          <div className="ml-[6px] h-[7px] w-[7px] bg-[#4a8a9a]" />
          <span className="ml-[6px] pb-[4px]">显示快捷键</span>
        </div>
      </div>

      {/* annotation arrow */}
      <svg className="pointer-events-none absolute inset-0 h-full w-full" viewBox="0 0 1024 768">
        <path d="M338 243 291 272 297 281 229 359 233 364 303 288 311 291Z" fill="#f40f0f" stroke="#f40f0f" strokeLinejoin="round" strokeWidth="1" />
      </svg>
    </div>
  );
}
